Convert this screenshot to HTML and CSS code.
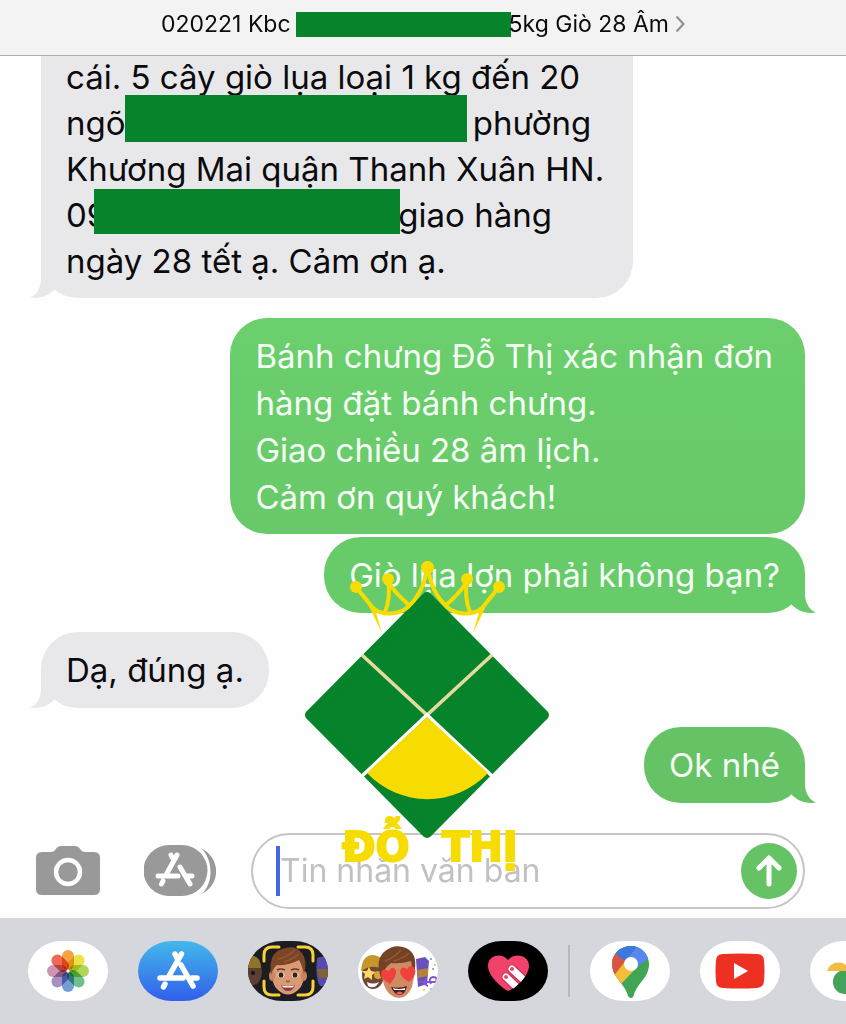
FILE: index.html
```html
<!DOCTYPE html>
<html lang="vi">
<head>
<meta charset="utf-8">
<meta name="viewport" content="width=device-width, initial-scale=1">
<title>Tin nhắn</title>
<link rel="stylesheet" href="styles.css">
</head>
<body>
<svg class="defs" aria-hidden="true">
  <symbol id="tail" viewBox="0 0 32 40"><path d="M20 0V21C20 29 24 37 31 39.500C21 41 13 38 7 32L0 20Z"/></symbol>
</svg>

<header class="topbar">
  <button class="title" type="button">
    <span>020221 Kbc</span><span class="mask mask-title"></span><span>5kg Giò 28 Âm</span>
    <svg class="chevron" viewBox="0 0 10 18" aria-hidden="true"><path d="M1.500 1.500L8.500 9L1.500 16.500"/></svg>
  </button>
</header>

<main class="chat">
  <div class="bubble received long">cái. 5 cây giò lụa loại 1 kg đến 20<br>ngõ<span class="mask mask-street"></span> phường<br>Khương Mai quận Thanh Xuân HN.<br>09<span class="mask mask-phone"></span>giao hàng<br>ngày 28 tết ạ. Cảm ơn ạ.<svg class="tail" aria-hidden="true"><use href="#tail"/></svg></div>
  <div class="bubble sent first">Bánh chưng Đỗ Thị xác nhận đơn<br>hàng đặt bánh chưng.<br>Giao chiều 28 âm lịch.<br>Cảm ơn quý khách!</div>
  <div class="bubble sent second">Giò lụa lợn phải không bạn?<svg class="tail" aria-hidden="true"><use href="#tail"/></svg></div>
  <div class="bubble received">Dạ, đúng ạ.<svg class="tail" aria-hidden="true"><use href="#tail"/></svg></div>
  <div class="bubble sent last">Ok nhé<svg class="tail" aria-hidden="true"><use href="#tail"/></svg></div>
</main>

<form class="composer">
  <button class="tool" type="button" aria-label="Máy ảnh">
    <svg width="64" height="50" viewBox="0 0 64 50"><path fill="#999" d="M6 6H15Q18 6 19.500 3.500Q21.500 0 25 0H39Q42.500 0 44.500 3.500Q46 6 49 6H58Q64 6 64 12V43Q64 49 58 49H6Q0 49 0 43V12Q0 6 6 6Z"/><circle cx="32" cy="26" r="12" fill="none" stroke="#fff" stroke-width="4.500"/></svg>
  </button>
  <button class="tool" type="button" aria-label="Ứng dụng">
    <svg width="72" height="52" viewBox="0 0 72 52"><path fill="#999" d="M25 0H38A25.500 25.500 0 0 1 38 51H25A25.500 25.500 0 0 1 25 0Z"/><path fill="#999" d="M57 3C77 13 77 39 58 49C70 37 69 14 57 3Z"/><g stroke="#fff" stroke-width="5" stroke-linecap="round" fill="none"><path d="M33 10L22 30M14 31H34M42 31H48M19 36L17.500 39M27 10L29 14M36 22L46 39"/></g></svg>
  </button>
  <div class="field">
    <span class="caret"></span>
    <input class="entry" type="text" placeholder="Tin nhắn văn bản" aria-label="Tin nhắn văn bản">
    <button class="send" type="submit" aria-label="Gửi"><svg width="28" height="34" viewBox="0 0 28 34"><path d="M14 30V5M4 14L14 4L24 14"/></svg></button>
  </div>
</form>

<nav class="apps" aria-label="Ứng dụng iMessage">
  <button class="app" type="button" aria-label="Ảnh">
    <svg viewBox="0 0 80 60"><g class="petals" transform="translate(40 30)">
      <rect x="-6" y="-21" width="12" height="20" rx="6" fill="#f39a2e"/>
      <rect x="-6" y="-21" width="12" height="20" rx="6" fill="#e9e02f" transform="rotate(45)"/>
      <rect x="-6" y="-21" width="12" height="20" rx="6" fill="#a9d04a" transform="rotate(90)"/>
      <rect x="-6" y="-21" width="12" height="20" rx="6" fill="#5cba83" transform="rotate(135)"/>
      <rect x="-6" y="-21" width="12" height="20" rx="6" fill="#6694d5" transform="rotate(180)"/>
      <rect x="-6" y="-21" width="12" height="20" rx="6" fill="#9c83bd" transform="rotate(225)"/>
      <rect x="-6" y="-21" width="12" height="20" rx="6" fill="#c98aa5" transform="rotate(270)"/>
      <rect x="-6" y="-21" width="12" height="20" rx="6" fill="#e85c45" transform="rotate(315)"/>
    </g><circle cx="40" cy="30" r="1.500" fill="#fff"/></svg>
  </button>
  <button class="app store" type="button" aria-label="App Store">
    <svg viewBox="0 0 80 60"><g fill="none" stroke="#fff" stroke-width="5.500" stroke-linecap="round"><path d="M43.500 13L31 35M22 37H45M54 37H59M27 43L25.500 46M37 13L39 17M43 24L55 45"/></g></svg>
  </button>
  <button class="app dark" type="button" aria-label="Memoji">
    <svg viewBox="0 0 80 60">
      <ellipse cx="5" cy="31" rx="9" ry="13" fill="#5b3f31"/><path d="M-4 27Q-3 14 6 15Q13 17 13 27Z" fill="#8d7428"/><circle cx="5" cy="32" r="2" fill="#1c1310"/>
      <path d="M69 17Q75 14 82 17V45H72Q67 38 69 17Z" fill="#554bb0"/><path d="M69 28H80V37H71Z" fill="#806236"/>
      <path d="M24 30Q24 16 40 16Q56 16 56 30Q57 43 50 49Q40 58 30 49Q23 43 24 30Z" fill="#d99972"/><ellipse cx="24" cy="35" rx="3" ry="5" fill="#c98460"/><ellipse cx="56" cy="35" rx="3" ry="5" fill="#c98460"/>
      <path d="M23 34Q20 12 34 8Q47 3 54 12Q60 20 56 33Q54 24 51 19Q40 25 29 24Q25 27 23 34Z" fill="#7b4528"/><path d="M30 18Q38 17 47 9M36 21Q45 18 51 13" stroke="#96592f" stroke-width="1.500" fill="none"/>
      <g fill="#fff"><ellipse cx="33" cy="34" rx="3.500" ry="2.500"/><ellipse cx="47" cy="34" rx="3.500" ry="2.500"/></g><circle cx="33" cy="34" r="2.500" fill="#2f2119"/><circle cx="47" cy="34" r="2.500" fill="#2f2119"/>
      <path d="M29 29Q33 27 37 29M43 29Q47 27 51 29" stroke="#653b25" stroke-width="1.500" fill="none"/><path d="M38 40Q40 41 42 40" stroke="#a65e45" stroke-width="1.500" fill="none"/><path d="M33 44Q40 46 47 44Q45 50 40 50Q35 50 33 44Z" fill="#843d43"/><path d="M34 44.500Q40 46 46 44.500L45 46.500H35Z" fill="#fff"/>
      <path d="M16 20V14Q16 6 24 6H31M50 6H57Q65 6 65 14V20M65 40V46Q65 54 57 54H50M31 54H24Q16 54 16 46V40" fill="none" stroke="#f5d238" stroke-width="3" stroke-linecap="round"/>
    </svg>
  </button>
  <button class="app" type="button" aria-label="Nhãn dán Memoji">
    <svg viewBox="0 0 80 60">
      <ellipse cx="15" cy="34" rx="11" ry="14" fill="#704936"/><path d="M3 30Q4 14 15 14Q26 15 27 29Q15 22 3 30Z" fill="#c6952b"/><path d="M11 26L13 30L18 31L14 34L14 39L10 36L6 38L7 33L4 30L9 30Z" fill="#ffd968"/><circle cx="20" cy="34" r="4" fill="#d6a33f"/><path d="M9 41Q15 44 21 41Q17 49 10 45Z" fill="#fff"/>
      <path d="M58 18L67 16L71 20L69 43L60 46Z" fill="#6851bd"/><path d="M59 29L70 27V35L60 37Z" fill="#b1813d"/><path d="M60 41H78Q80 36 75 36Q70 37 73 43M68 37Q64 43 70 45" fill="none" stroke="#8355ca" stroke-width="2"/><g fill="#45a3df"><circle cx="73" cy="18" r="1"/><circle cx="75" cy="28" r="1"/><circle cx="73" cy="48" r="1"/></g><circle cx="77" cy="24" r="1" fill="#f5bd3c"/><circle cx="66" cy="49" r="1" fill="#f5bd3c"/>
      <path d="M23 31Q21 10 40 10Q58 11 57 31L54 46Q49 57 41 57Q30 56 26 44Z" fill="#d18a62"/><path d="M23 37Q17 19 26 11Q36 2 48 7Q59 12 57 28L55 34L53 20Q43 23 33 22Q26 27 23 37Z" fill="#754127"/><path d="M27 20Q36 17 43 9M36 20Q46 17 51 12" stroke="#96592f" stroke-width="1.500" fill="none"/>
      <path d="M32 43Q23 38 23 32Q24 26 31 30Q34 24 38 29Q39 35 32 43Z" fill="#f0413c"/><path d="M51 41Q42 36 42 30Q44 24 49 28Q53 22 57 28Q59 34 51 41Z" fill="#f0413c"/><path d="M33 46Q41 48 49 45Q47 54 41 54Q36 53 33 46Z" fill="#48211f"/><path d="M35 47Q41 49 47 47V49H36Z" fill="#fff"/><path d="M38 52Q42 49 45 52Q41 55 38 52Z" fill="#e5686c"/>
    </svg>
  </button>
  <button class="app black" type="button" aria-label="Digital Touch">
    <svg viewBox="0 0 80 60"><clipPath id="heart"><path d="M40 50C34 47 20 35 20 25C20 14 33 11 40 19C47 11 61 14 61 25C61 35 47 48 40 50Z"/></clipPath><g clip-path="url(#heart)"><path d="M18 8H64V54H18Z" fill="#f0426b"/><g fill="none" stroke-linecap="round"><path d="M44 28L60 43M38 36L54 51" stroke="#c62c50" stroke-width="9"/><path d="M44 28L60 43M38 36L54 51" stroke="#fff" stroke-width="7"/></g><g fill="#f0426b"><circle cx="44" cy="28" r="2"/><circle cx="38" cy="36" r="2"/></g></g></svg>
  </button>
  <span class="divider"></span>
  <button class="app" type="button" aria-label="Google Maps">
    <svg viewBox="0 0 80 60"><clipPath id="pin"><path d="M41 5C30 5 22 13 22 23C22 30 26 36 30 41C35 47 37 51 38 55Q39 57 41 57Q43 57 43.500 55C45 49 48 45 52 40C57 34 59 29 59 23C59 13 51 5 41 5Z"/></clipPath><g clip-path="url(#pin)"><path d="M20 0H62V60H20Z" fill="#42a455"/><path d="M20 0H50L41 23L28 16L20 9Z" fill="#3e78df"/><path d="M20 8L36 21L22 40Z" fill="#d95645"/><path d="M22 37L37 18L51 22L31 43Z" fill="#f5bd39"/><path d="M37 18L52 0L62 14L45 28Z" fill="#5888ed"/></g><circle cx="41" cy="23" r="7" fill="#fff"/></svg>
  </button>
  <button class="app" type="button" aria-label="YouTube">
    <svg viewBox="0 0 80 60"><path d="M23 13Q40 12 57 13Q64 13 64 20Q65 30 64 40Q64 46 57 47Q40 48 23 47Q16 47 16 40Q15 30 16 20Q16 13 23 13Z" fill="#ee3023"/><path d="M34 22V38L48 30Z" fill="#fff"/></svg>
  </button>
  <button class="app" type="button" aria-label="Google Photos">
    <svg viewBox="0 0 80 60"><path d="M17 30A12 12 0 0 1 40 30Z" fill="#f3bb41"/><path d="M40 30H30A11 11 0 0 0 40 52Z" fill="#44a35a"/><path d="M40 8V30A11 11 0 0 0 40 8Z" fill="#de5546"/><path d="M40 30H63A12 12 0 0 1 40 30Z" fill="#4b81e7"/></svg>
  </button>
</nav>

<svg class="brand" viewBox="304 560 248 312" role="img" aria-label="Đỗ Thị">
  <path d="M427 597L544 715L427 833L310 715Z" fill="#06832b" stroke="#06832b" stroke-width="10" stroke-linejoin="round"/>
  <path d="M362 655L427 715L492 655" fill="none" stroke="#e4dc9f" stroke-width="3.500"/>
  <path d="M362 776L427 715L492 776" fill="none" stroke="#fff" stroke-width="3.500"/>
  <path d="M427 717L488 773A83 83 0 0 1 367 773Z" fill="#f6dc00"/>
  <g id="crown-half" fill="none" stroke="#f6dc00" stroke-width="4">
    <path d="M356 587L373 608C382 616 399 615 408 607Q424 592 427 568"/>
    <path d="M388 579Q391 598 385 612M389 583Q396 594 409 605"/>
    <path d="M366 600L382 633L375 609Z" fill="#f6dc00" stroke="none"/>
    <g fill="#f6dc00" stroke="none"><circle cx="356" cy="587" r="6"/><circle cx="388" cy="579" r="6"/><circle cx="427.500" cy="567.500" r="6.500"/></g>
  </g>
  <use href="#crown-half" transform="translate(855 0) scale(-1 1)"/>
  <text class="brand-name" x="342" y="861">ĐỖ</text>
  <text class="brand-name" x="442" y="861">THỊ</text>
</svg>
</body>
</html>
```
FILE: styles.css
```css
* { box-sizing: border-box; }
body {
  position: relative;
  display: flex;
  flex-direction: column;
  height: 100vh;
  margin: 0;
  overflow: hidden;
  background: #fefefe;
  color: #0b0b0d;
  font-family: Inter, "Noto Sans", sans-serif;
}
button { padding: 0; border: 0; background: none; color: inherit; font: inherit; }
svg { display: block; }
.defs { position: absolute; width: 0; height: 0; }

.topbar {
  flex: none;
  display: flex;
  justify-content: center;
  height: 56px;
  padding-top: 9px;
  border-bottom: 1px solid #adadaf;
  background: #f3f3f3;
}
.title { display: flex; align-items: center; height: 30px; font-size: 23px; white-space: nowrap; }
.chevron { width: 10px; height: 18px; margin-left: 6px; fill: none; stroke: #8e8e92; stroke-width: 2; }
.mask { display: inline-block; background: #06832b; }
.mask-title { width: 215px; height: 25px; margin: 0 -2px 0 5px; }
.mask-street { width: 342px; height: 47px; margin: -5px -3px 0 -1px; vertical-align: top; }
.mask-phone { position: relative; width: 306px; height: 45px; margin: -3px -2px 0 -13px; vertical-align: top; }

.chat {
  flex: 1;
  display: flex;
  flex-direction: column;
  justify-content: flex-end;
  min-height: 0;
  padding: 0 41px;
  overflow: hidden;
}
.bubble {
  position: relative;
  flex: none;
  padding: 15px 25px 14px;
  border-radius: 37px;
  font-size: 33px;
  line-height: 47px;
  white-space: nowrap;
}
.received { align-self: flex-start; background: #e8e8eb; }
.long { padding: 15px 29px 14px 25px; border-radius: 0 0 37px 37px; line-height: 46px; }
.sent { align-self: flex-end; color: #f6fff5; background: #68cb6a; }
.first { margin-top: 20px; padding: 15px 32px 13px 25px; background: linear-gradient(#6acf6c, #69c96a); }
.second { margin: 3px 0 19px; }
.last { margin-top: 19px; background: #66c365; }
.tail { position: absolute; bottom: 0; width: 32px; height: 40px; }
.sent .tail { right: -12px; fill: #68cb6a; }
.last .tail { fill: #66c365; }
.received .tail { left: -12px; fill: #e8e8eb; transform: scaleX(-1); }

.composer { flex: none; display: flex; align-items: center; padding: 30px 41px 9px 36px; }
.tool { flex: none; margin-right: 44px; }
.tool + .tool { margin-right: 35px; }
.field {
  flex: 1;
  display: flex;
  align-items: center;
  min-width: 0;
  height: 76px;
  padding: 0 6px 0 23px;
  border: 2px solid #c5c5c7;
  border-radius: 38px;
  background: #fff;
}
.caret { flex: none; width: 4px; height: 50px; background: #4766e6; }
.entry {
  flex: 1;
  min-width: 0;
  padding: 0;
  border: 0;
  outline: 0;
  background: none;
  font: 32px/46px Inter, "Noto Sans", sans-serif;
}
.entry::placeholder { color: #c1c1c4; opacity: 1; }
.send { display: flex; align-items: center; justify-content: center; flex: none; width: 56px; height: 56px; border-radius: 50%; background: #66c365; }
.send svg { fill: none; stroke: #fff; stroke-width: 5; stroke-linecap: round; stroke-linejoin: round; }

.apps { flex: none; display: flex; align-items: center; gap: 30px; height: 106px; padding-left: 28px; overflow: hidden; background: #d5d7dc; }
.app { flex: none; width: 80px; height: 60px; border-radius: 34px / 30px; overflow: hidden; background: #fff; }
.app svg { width: 80px; height: 60px; }
.store { background: linear-gradient(#43b8ea, #315feb); }
.dark { background: #1d1c20; }
.black { background: #000; }
.petals rect { mix-blend-mode: multiply; opacity: .9; }
.divider { flex: none; width: 2px; height: 52px; margin: 0 -10px; background: #b6b8bc; }

.brand { position: absolute; left: 304px; bottom: 152px; width: 248px; height: 312px; pointer-events: none; }
.brand-name { fill: #f6dc00; stroke: #f6dc00; stroke-width: 2; font: bold 40px "DejaVu Sans", sans-serif; }
```
